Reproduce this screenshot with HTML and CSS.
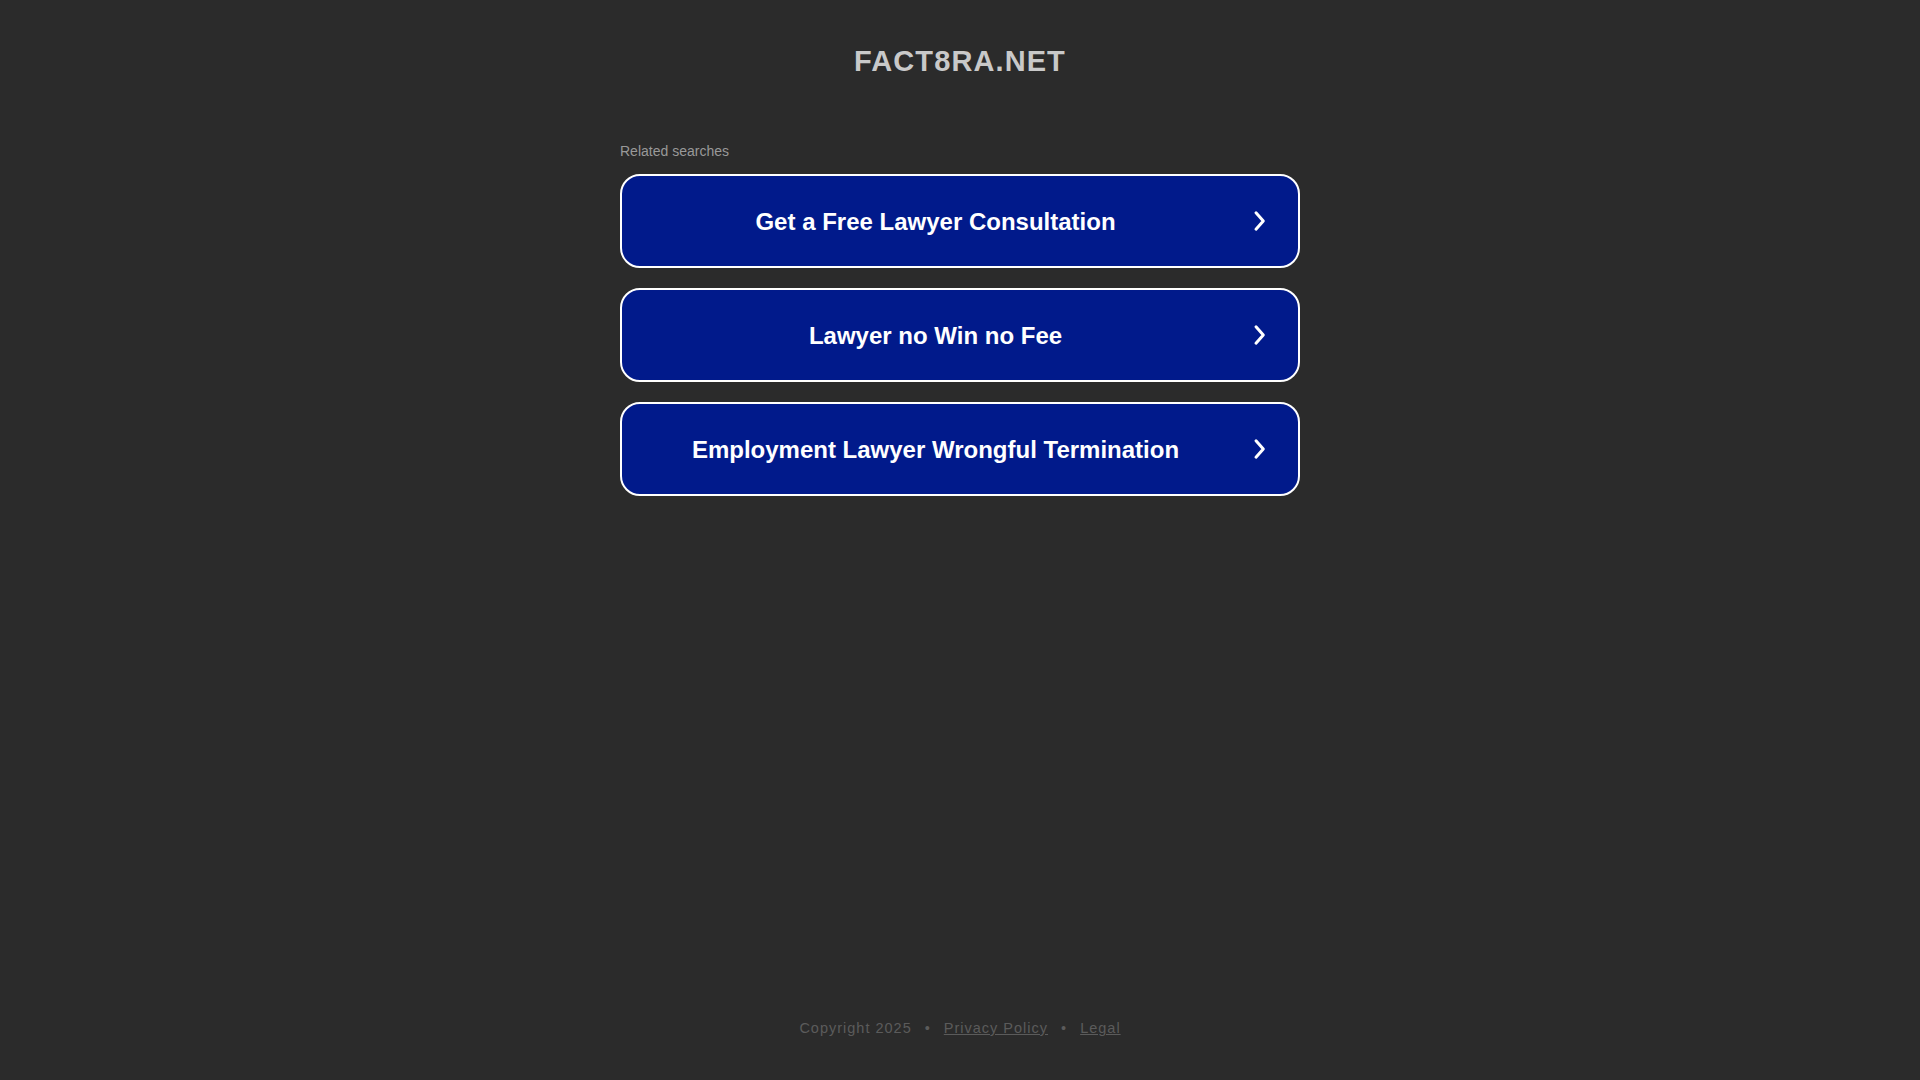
FILE: index.html
```html
<!DOCTYPE html>
<html lang="en">
<head>
<meta charset="utf-8">
<title>fact8ra.net</title>
<link rel="stylesheet" href="styles.css">
</head>
<body>
<div class="page">
  <header class="header">
    <h1 class="domain">FACT8RA.NET</h1>
  </header>
  <main class="main">
    <div class="related">
      <p class="related-title">Related searches</p>
      <ul class="links">
        <li><a class="link" href="#"><span class="link-text">Get a Free Lawyer Consultation</span><svg class="chev" viewBox="0 0 24 24" width="24" height="24"><path d="M9 3.8 L16.3 12 L9 20.2" fill="none" stroke="#fff" stroke-width="3" stroke-linecap="round" stroke-linejoin="round"/></svg></a></li>
        <li><a class="link" href="#"><span class="link-text">Lawyer no Win no Fee</span><svg class="chev" viewBox="0 0 24 24" width="24" height="24"><path d="M9 3.8 L16.3 12 L9 20.2" fill="none" stroke="#fff" stroke-width="3" stroke-linecap="round" stroke-linejoin="round"/></svg></a></li>
        <li><a class="link" href="#"><span class="link-text">Employment Lawyer Wrongful Termination</span><svg class="chev" viewBox="0 0 24 24" width="24" height="24"><path d="M9 3.8 L16.3 12 L9 20.2" fill="none" stroke="#fff" stroke-width="3" stroke-linecap="round" stroke-linejoin="round"/></svg></a></li>
      </ul>
    </div>
  </main>
  <footer class="footer">
    <span>Copyright 2025</span><span class="sep">•</span><a href="#">Privacy Policy</a><span class="sep">•</span><a href="#">Legal</a>
  </footer>
</div>
</body>
</html>
```

FILE: styles.css
```css
html, body {
  margin: 0;
  padding: 0;
  background: #2b2b2b;
  font-family: "Liberation Sans", Arial, sans-serif;
}

.page {
  min-height: 100vh;
  display: flex;
  flex-direction: column;
}

.header {
  padding-top: 44px;
  text-align: center;
}

.domain {
  margin: 0;
  font-size: 29px;
  line-height: 34px;
  font-weight: bold;
  letter-spacing: 1.1px;
  color: #c9c9c9;
}

.main {
  flex: 1;
  display: flex;
  justify-content: center;
}

.related {
  width: 680px;
  margin-top: 65px;
}

.related-title {
  margin: 0 0 15px 0;
  font-size: 14px;
  line-height: 16px;
  color: #999999;
}

.links {
  list-style: none;
  margin: 0;
  padding: 0;
  display: flex;
  flex-direction: column;
  gap: 20px;
}

.link {
  box-sizing: border-box;
  height: 94px;
  display: flex;
  align-items: center;
  padding: 0 27px 0 2px;
  background: #011a8b;
  border: 2px solid #ffffff;
  border-radius: 20px;
  text-decoration: none;
  color: #ffffff;
}

.link-text {
  flex: 1;
  text-align: center;
  font-size: 24px;
  font-weight: bold;
  line-height: 28px;
  padding-top: 2px;
}

.chev {
  flex: none;
  display: block;
}

.footer {
  padding-bottom: 44px;
  text-align: center;
  font-size: 14.5px;
  line-height: 16px;
  letter-spacing: 1px;
  color: #5b5b5b;
}

.footer a {
  color: #5b5b5b;
  text-decoration: underline;
}

.sep {
  margin: 0 13px;
}
```
